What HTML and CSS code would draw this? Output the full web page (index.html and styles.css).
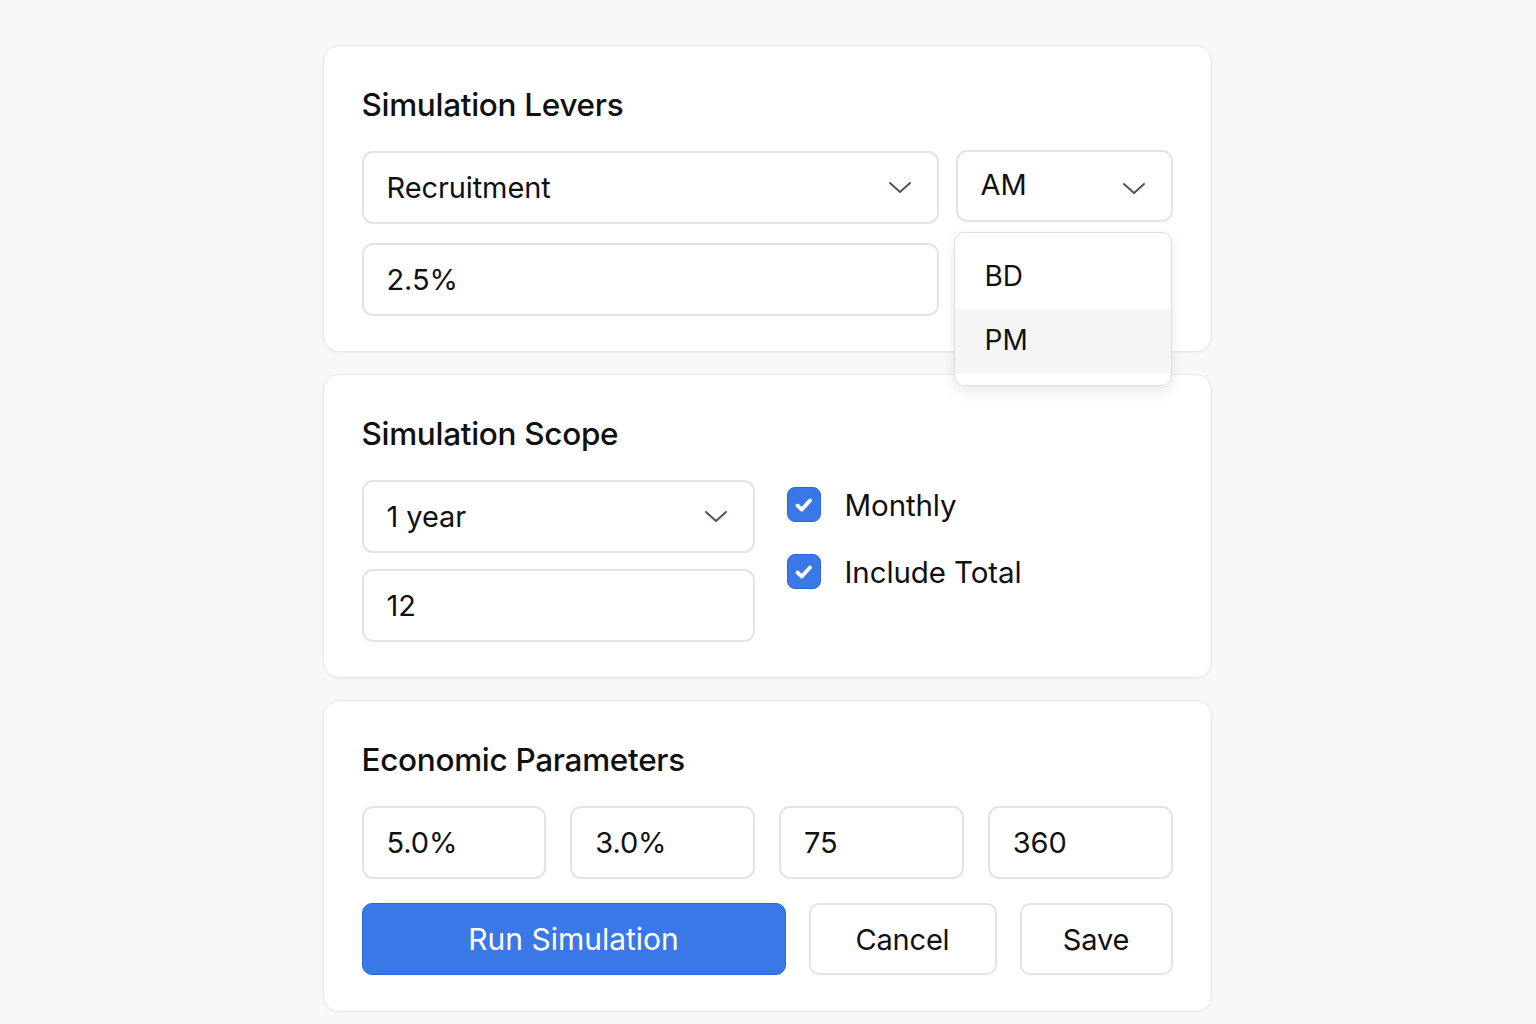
FILE: index.html
```html
<!DOCTYPE html>
<html lang="en">
<head>
<meta charset="utf-8">
<title>Simulation</title>
<link rel="stylesheet" href="styles.css">
</head>
<body>
<main class="page">
  <section class="card">
    <h2 class="card-title">Simulation Levers</h2>
    <div class="levers-grid">
      <div class="field select">
        <span>Recruitment</span>
        <svg class="chev" viewBox="0 0 24 14" width="24" height="14"><path d="M2 2 L12 11 L22 2" fill="none" stroke="#4a5566" stroke-width="2" stroke-linecap="round" stroke-linejoin="round"/></svg>
      </div>
      <div class="select-wrap">
        <div class="field select field-am">
          <span>AM</span>
          <svg class="chev chev-am" viewBox="0 0 24 14" width="24" height="14"><path d="M2 2 L12 11 L22 2" fill="none" stroke="#4a5566" stroke-width="2" stroke-linecap="round" stroke-linejoin="round"/></svg>
        </div>
        <ul class="menu">
          <li class="menu-item">BD</li>
          <li class="menu-item hover">PM</li>
        </ul>
      </div>
      <div class="field">2.5%</div>
    </div>
  </section>

  <section class="card">
    <h2 class="card-title">Simulation Scope</h2>
    <div class="scope-grid">
      <div class="scope-col">
        <div class="field select">
          <span>1 year</span>
          <svg class="chev" viewBox="0 0 24 14" width="24" height="14"><path d="M2 2 L12 11 L22 2" fill="none" stroke="#4a5566" stroke-width="2" stroke-linecap="round" stroke-linejoin="round"/></svg>
        </div>
        <div class="field">12</div>
      </div>
      <div class="checks">
        <label class="check"><span class="box"><svg viewBox="0 0 22 22" width="22" height="22"><path d="M4.5 11.5 L8.8 15.6 L17 6.5" fill="none" stroke="#fff" stroke-width="3.8" stroke-linecap="round" stroke-linejoin="round"/></svg></span>Monthly</label>
        <label class="check"><span class="box"><svg viewBox="0 0 22 22" width="22" height="22"><path d="M4.5 11.5 L8.8 15.6 L17 6.5" fill="none" stroke="#fff" stroke-width="3.8" stroke-linecap="round" stroke-linejoin="round"/></svg></span>Include Total</label>
      </div>
    </div>
  </section>

  <section class="card">
    <h2 class="card-title">Economic Parameters</h2>
    <div class="params-grid">
      <div class="field">5.0%</div>
      <div class="field">3.0%</div>
      <div class="field">75</div>
      <div class="field">360</div>
    </div>
    <div class="buttons">
      <button class="btn btn-primary">Run Simulation</button>
      <button class="btn">Cancel</button>
      <button class="btn">Save</button>
    </div>
  </section>
</main>
</body>
</html>
```

FILE: styles.css
```css
* { box-sizing: border-box; }
html, body { margin: 0; padding: 0; }
body {
  background: #f8f8f8;
  font-family: Inter, "Noto Sans", "Liberation Sans", sans-serif;
  color: #111;
}
.page {
  width: 889px;
  margin: 0 auto;
  padding-top: 45px;
  display: flex;
  flex-direction: column;
  gap: 22px;
  transform: translateX(-1px);
}
.card {
  background: #fff;
  border: 1px solid #e8e8e8;
  border-radius: 16px;
  box-shadow: 0 1px 3px rgba(0,0,0,0.05);
  padding: 41px 38px 35px 38px;
}
.card:last-child { padding-bottom: 36px; }
.card-title {
  margin: 0 0 28px 0;
  font-size: 31.5px;
  line-height: 36px;
  font-weight: 500;
  letter-spacing: -0.3px;
  color: #111;
}
.field {
  height: 73px;
  border: 2px solid #e4e4e7;
  border-radius: 11px;
  background: #fff;
  display: flex;
  align-items: center;
  padding: 0 24px 0 23px;
  font-size: 29px;
  letter-spacing: -0.1px;
  color: #111;
}
.select { justify-content: space-between; }
.chev { margin-right: 1px; }
.levers-grid {
  display: grid;
  grid-template-columns: 577px 1fr;
  column-gap: 17px;
  row-gap: 19px;
}
.select-wrap { position: relative; }
.field-am { height: 72px; margin-top: -1px; }
.field-am span { margin-top: -4px; }
.chev-am { margin-top: 6px; }
.menu {
  position: absolute;
  top: 81px;
  left: -2px;
  width: 218px;
  margin: 0;
  padding: 12px 0;
  list-style: none;
  background: #fff;
  border: 1.5px solid #dedee2;
  border-radius: 10px;
  box-shadow: 0 6px 14px rgba(0,0,0,0.09);
  z-index: 5;
}
.menu-item {
  height: 64px;
  display: flex;
  align-items: center;
  padding-left: 30px;
  padding-bottom: 2px;
  font-size: 28px;
  color: #111;
}
.menu-item.hover { background: #f5f5f6; }
.scope-grid {
  display: grid;
  grid-template-columns: 393px 1fr;
  column-gap: 32px;
}
.scope-col {
  display: flex;
  flex-direction: column;
  gap: 16px;
}
.checks {
  display: flex;
  flex-direction: column;
  gap: 32px;
  padding-top: 7px;
}
.check {
  display: flex;
  align-items: center;
  gap: 24px;
  height: 35px;
  font-size: 29.5px;
  letter-spacing: -0.1px;
  color: #111;
}
.box {
  width: 34px;
  height: 35px;
  border-radius: 8px;
  background: #3b78e7;
  border: 1px solid #2f68d6;
  display: flex;
  align-items: center;
  justify-content: center;
}
.params-grid {
  display: grid;
  grid-template-columns: repeat(4, 1fr);
  column-gap: 24px;
}
.buttons {
  margin-top: 24px;
  display: grid;
  grid-template-columns: 424px 188px 1fr;
  column-gap: 23px;
}
.btn {
  height: 72px;
  border: 2px solid #e4e4e7;
  border-radius: 10px;
  background: #fff;
  font-family: inherit;
  font-size: 29px;
  letter-spacing: -0.2px;
  color: #111;
  padding: 0;
}
.btn-primary {
  background: #3b78e7;
  border: 1px solid #2c66d6;
  color: #fff;
  font-size: 30px;
  letter-spacing: 0;
}
```
